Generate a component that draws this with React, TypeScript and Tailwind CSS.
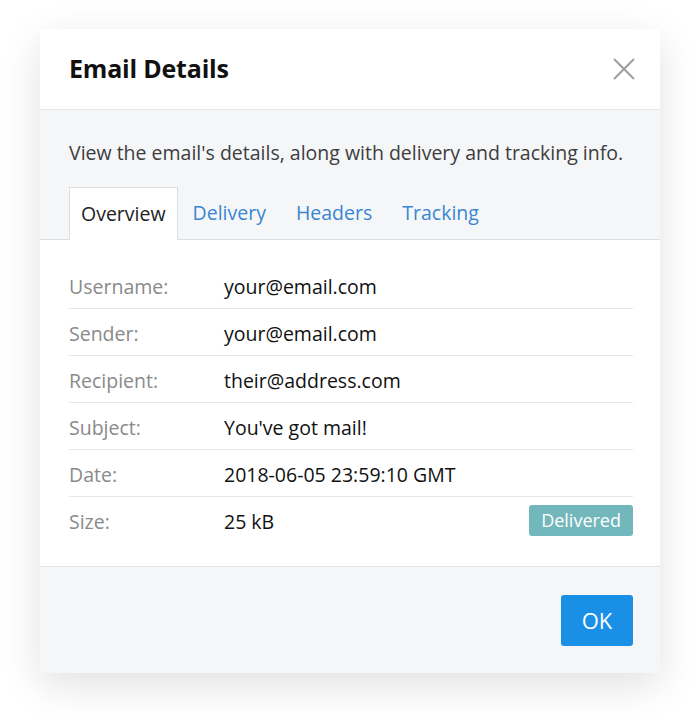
import React, { useState } from 'react';

type Row = { label: string; value: string; badge?: string };

const rows: Row[] = [
  { label: 'Username:', value: 'your@email.com' },
  { label: 'Sender:', value: 'your@email.com' },
  { label: 'Recipient:', value: 'their@address.com' },
  { label: 'Subject:', value: "You've got mail!" },
  { label: 'Date:', value: '2018-06-05 23:59:10 GMT' },
  { label: 'Size:', value: '25 kB', badge: 'Delivered' },
];

const tabs = ['Overview', 'Delivery', 'Headers', 'Tracking'];

function CloseIcon() {
  return (
    <svg width="22" height="22" viewBox="0 0 22 22" className="text-[#9b9b9b]">
      <path d="M1 1L21 21M21 1L1 21" stroke="currentColor" strokeWidth="1.8" fill="none" />
    </svg>
  );
}

export default function App() {
  const [active, setActive] = useState('Overview');

  return (
    <div className="min-h-[724px] w-[700px] bg-white pt-[29px] font-['Open_Sans',sans-serif]">
      <div className="mx-auto w-[620px] overflow-hidden rounded-[4px] bg-white shadow-[0_12px_40px_rgba(0,0,0,0.12)]">
        {/* Header */}
        <div className="flex h-[81px] items-center justify-between border-b border-[#e6e7e9] pl-[29px] pr-[25px]">
          <h1 className="text-[25px] font-bold tracking-[-0.2px] text-[#111]">Email Details</h1>
          <button className="p-0">
            <CloseIcon />
          </button>
        </div>

        {/* Description + tabs */}
        <div className="bg-[#f5f6f8] pt-[30px]">
          <p className="px-[29px] text-[19.5px] leading-[26px] text-[#3d3d3d]">
            View the email's details, along with delivery and tracking info.
          </p>
          <div className="mt-[21px] flex items-end border-b border-[#dcdde0] px-[29px]">
            {tabs.map((t) => {
              const on = t === active;
              return (
                <button
                  key={t}
                  onClick={() => setActive(t)}
                  className={
                    on
                      ? '-mb-px h-[53px] border border-b-0 border-[#dcdde0] bg-white px-[11px] text-[19.5px] text-[#222]'
                      : 'h-[52px] px-[15px] text-[19.5px] text-[#3a86d0]'
                  }
                >
                  {t}
                </button>
              );
            })}
          </div>
        </div>

        {/* Rows */}
        <div className="bg-white pb-[22px] pl-[29px] pr-[27px] pt-[22px]">
          {rows.map((r, i) => (
            <div
              key={r.label}
              className={
                'flex h-[47px] items-center pt-[3px] text-[19.5px] ' +
                (i < rows.length - 1 ? 'border-b border-[#e6e7e9]' : '')
              }
            >
              <div className="w-[155px] text-[#8a8a8a]">{r.label}</div>
              <div className="flex-1 text-[#111]">{r.value}</div>
              {r.badge && (
                <span className="-mt-[3px] rounded-[3px] bg-[#72b7bb] px-[12px] py-[3px] text-[18px] leading-[25px] text-white">
                  {r.badge}
                </span>
              )}
            </div>
          ))}
        </div>

        {/* Footer */}
        <div className="flex h-[107px] items-center justify-end border-t border-[#e2e3e6] bg-[#f5f6f8] px-[27px]">
          <button className="h-[51px] w-[72px] rounded-[3px] bg-[#1a8fe6] text-[22px] text-white">OK</button>
        </div>
      </div>
    </div>
  );
}
